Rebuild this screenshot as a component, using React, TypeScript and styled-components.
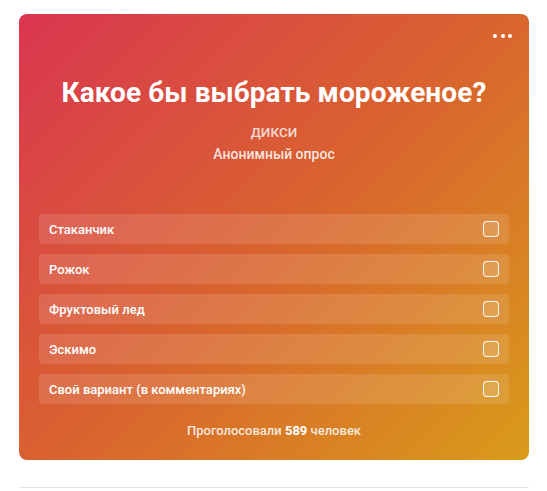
import React from "react";
import styled, { createGlobalStyle } from "styled-components";

const Global = createGlobalStyle`
  html, body { margin: 0; padding: 0; background: #fff; }
  body { font-family: Roboto, "Noto Sans", Arial, sans-serif; -webkit-font-smoothing: antialiased; }
  * { box-sizing: border-box; }
`;

const Page = styled.div`
  width: 547px;
  padding: 14px 18px 0 19px;
`;

const Card = styled.div`
  position: relative;
  width: 510px;
  height: 446px;
  border-radius: 8px;
  background: linear-gradient(135deg, #da3650 0%, #d9632f 50%, #d99b1a 100%);
  padding: 62px 20px 0;
  display: flex;
  flex-direction: column;
  align-items: stretch;
  color: #fff;
`;

const MenuButton = styled.div`
  position: absolute;
  top: 18px;
  right: 15px;
  display: flex;
  gap: 3.5px;
  padding: 2px;
`;

const Dot = styled.span`
  width: 4px;
  height: 4px;
  border-radius: 50%;
  background: #fff;
`;

const Title = styled.h1`
  margin: 0;
  font-size: 28px;
  line-height: 34px;
  font-weight: 700;
  text-align: center;
  letter-spacing: 0.1px;
`;

const Author = styled.div`
  margin-top: 14px;
  font-size: 13.5px;
  line-height: 16px;
  font-weight: 500;
  text-align: center;
  color: rgba(255, 255, 255, 0.8);
`;

const Kind = styled.div`
  margin-top: 6px;
  font-size: 14px;
  line-height: 16px;
  font-weight: 500;
  text-align: center;
  color: rgba(255, 255, 255, 0.85);
`;

const Options = styled.div`
  margin-top: 52px;
  display: flex;
  flex-direction: column;
  gap: 10px;
`;

const Option = styled.label`
  height: 30px;
  display: flex;
  align-items: center;
  justify-content: space-between;
  padding: 0 10px;
  border-radius: 4px;
  background: rgba(255, 255, 255, 0.12);
  font-size: 13px;
  font-weight: 500;
  color: #fff;
`;

const Check = styled.span`
  width: 16px;
  height: 16px;
  border-radius: 4px;
  border: 1.5px solid rgba(255, 255, 255, 0.95);
  background: rgba(255, 255, 255, 0.12);
`;

const Footer = styled.div`
  margin-top: 19px;
  text-align: center;
  font-size: 13px;
  line-height: 16px;
  font-weight: 500;
  color: rgba(255, 255, 255, 0.85);
  b { font-weight: 700; color: #fff; }
`;

const Divider = styled.div`
  margin-top: 27px;
  width: 510px;
  height: 1px;
  background: #e1e3e6;
`;

const options = [
  "Стаканчик",
  "Рожок",
  "Фруктовый лед",
  "Эскимо",
  "Свой вариант (в комментариях)",
];

export default function App() {
  return (
    <>
      <Global />
      <Page>
        <Card>
          <MenuButton>
            <Dot />
            <Dot />
            <Dot />
          </MenuButton>
          <Title>Какое бы выбрать мороженое?</Title>
          <Author>ДИКСИ</Author>
          <Kind>Анонимный опрос</Kind>
          <Options>
            {options.map((o) => (
              <Option key={o}>
                {o}
                <Check />
              </Option>
            ))}
          </Options>
          <Footer>
            Проголосовали <b>589</b> человек
          </Footer>
        </Card>
        <Divider />
      </Page>
    </>
  );
}
